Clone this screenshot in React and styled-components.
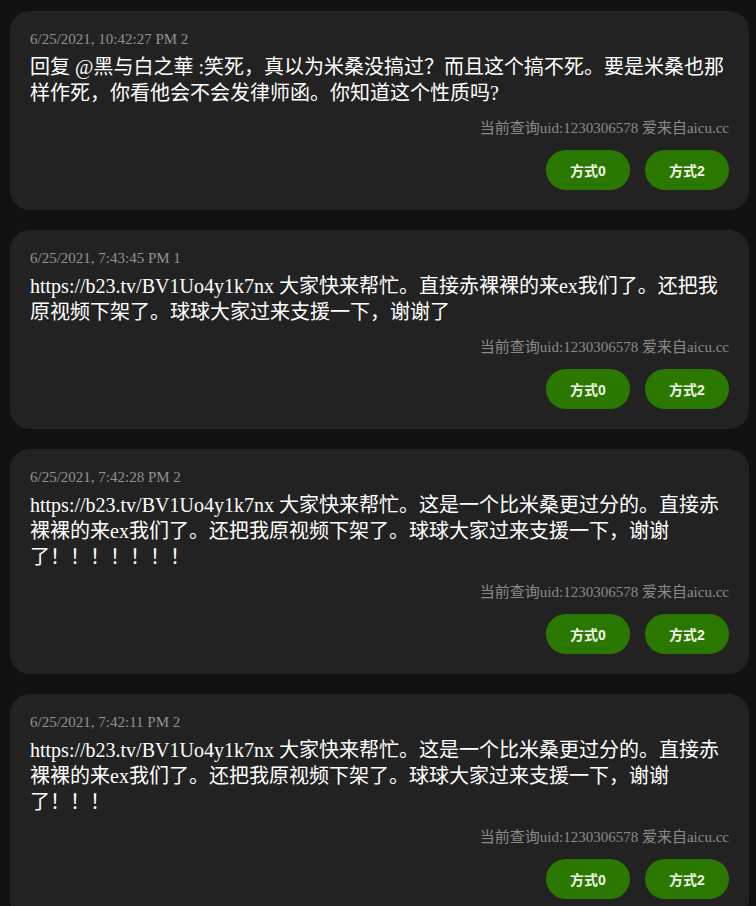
import React from 'react';
import styled, { createGlobalStyle } from 'styled-components';

const comments = [
  {
    date: '6/25/2021, 10:42:27 PM 2',
    text: '回复 @黑与白之華 :笑死，真以为米桑没搞过？而且这个搞不死。要是米桑也那样作死，你看他会不会发律师函。你知道这个性质吗?',
  },
  {
    date: '6/25/2021, 7:43:45 PM 1',
    text: 'https://b23.tv/BV1Uo4y1k7nx 大家快来帮忙。直接赤裸裸的来ex我们了。还把我原视频下架了。球球大家过来支援一下，谢谢了',
  },
  {
    date: '6/25/2021, 7:42:28 PM 2',
    text: 'https://b23.tv/BV1Uo4y1k7nx 大家快来帮忙。这是一个比米桑更过分的。直接赤裸裸的来ex我们了。还把我原视频下架了。球球大家过来支援一下，谢谢了！！！！！！！',
  },
  {
    date: '6/25/2021, 7:42:11 PM 2',
    text: 'https://b23.tv/BV1Uo4y1k7nx 大家快来帮忙。这是一个比米桑更过分的。直接赤裸裸的来ex我们了。还把我原视频下架了。球球大家过来支援一下，谢谢了！！！',
  },
];

const GlobalStyle = createGlobalStyle`
  body {
    margin: 0;
    background: #121212;
    font-family: "Liberation Serif", "Noto Sans CJK SC", serif;
  }
`;

const App = () => {
  return (
    <>
      <GlobalStyle />
      <List>
        {comments.map((c, i) => (
          <Card key={i}>
            <DateLine>{c.date}</DateLine>
            <Body>{c.text}</Body>
            <Source>当前查询uid:1230306578 爱来自aicu.cc</Source>
            <Actions>
              <ModeButton>方式0</ModeButton>
              <ModeButton>方式2</ModeButton>
            </Actions>
          </Card>
        ))}
      </List>
    </>
  );
};

export default App;

const List = styled.div`
  display: flex;
  flex-direction: column;
  gap: 20.5px;
  padding: 11px 7px 20px 10px;
`;

const Card = styled.div`
  background: #222222;
  border-radius: 20px;
  padding: 21px 20px 19.5px 20px;
  display: flex;
  flex-direction: column;
`;

const DateLine = styled.div`
  color: #929292;
  font-size: 15px;
  line-height: 15px;
`;

const Body = styled.div`
  margin-top: 7px;
  color: #ffffff;
  font-size: 20px;
  line-height: 26px;
`;

const Source = styled.div`
  margin-top: 14px;
  align-self: flex-end;
  color: #8a8a8a;
  font-size: 15px;
  line-height: 16px;
`;

const Actions = styled.div`
  margin-top: 14px;
  display: flex;
  justify-content: flex-end;
  gap: 15px;
`;

const ModeButton = styled.button`
  width: 84px;
  height: 40px;
  border: none;
  border-radius: 20px;
  background: #2b7800;
  color: #f0f4e8;
  font-family: "Liberation Sans", "Noto Sans CJK SC", sans-serif;
  font-weight: bold;
  font-size: 14px;
  cursor: pointer;
  padding: 0;
`;
